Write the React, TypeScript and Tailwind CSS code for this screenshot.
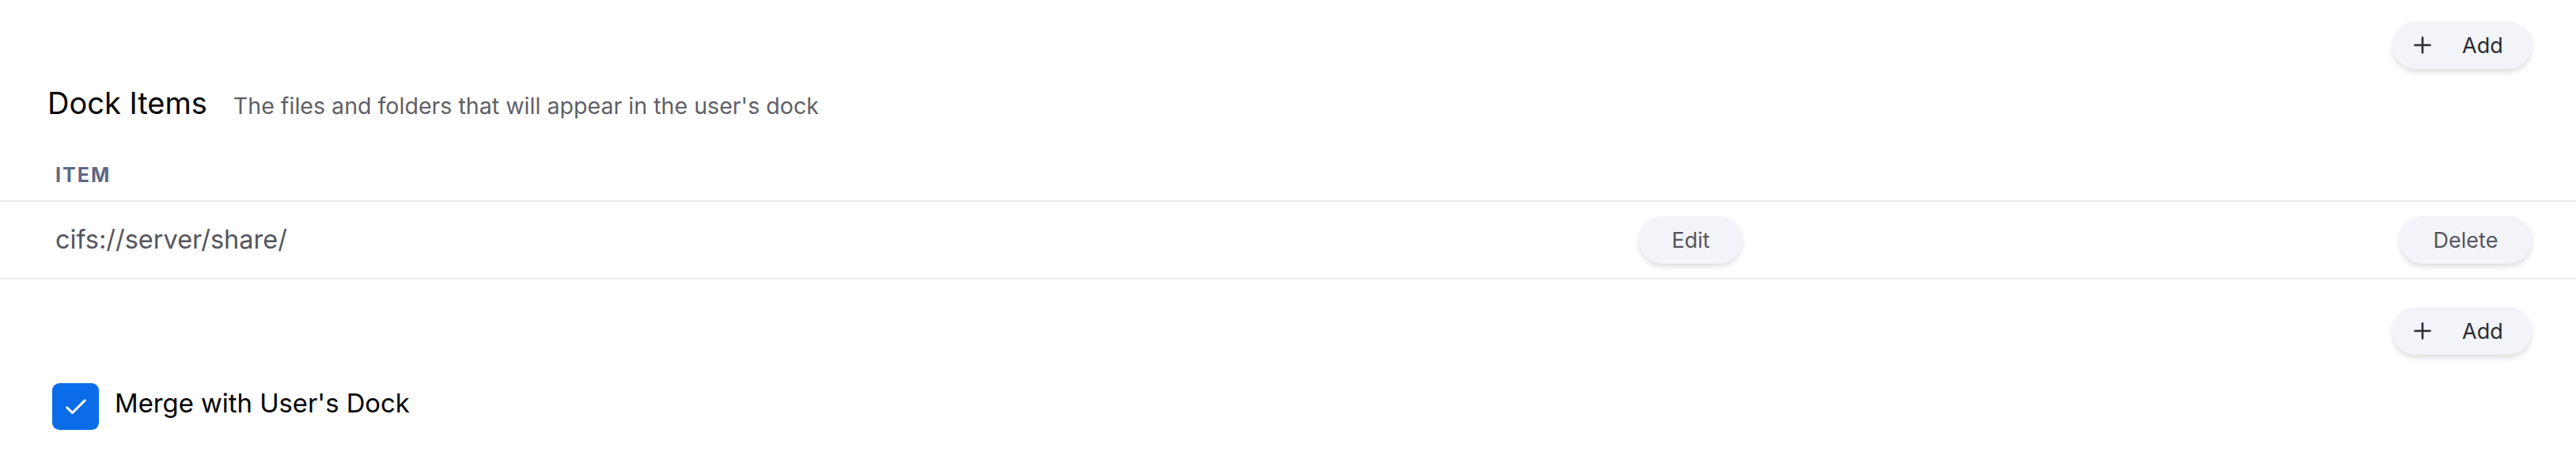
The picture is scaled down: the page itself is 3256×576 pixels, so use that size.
import { ReactNode } from 'react'

const font = { fontFamily: 'Inter, "Liberation Sans", sans-serif' }

function PillButton({ children, className = '' }: { children: ReactNode; className?: string }) {
  return (
    <button
      className={`h-[60px] rounded-full bg-[#f3f4f9] shadow-[0_4px_7px_rgba(0,0,0,0.13)] flex items-center text-[27px] leading-none ${className}`}
    >
      {children}
    </button>
  )
}

function AddButton() {
  return (
    <PillButton className="w-[176px] pl-[27px] gap-[39px] text-[#2c2c33]">
      <svg width="22" height="22" viewBox="0 0 22 22" fill="none" stroke="#2c2c33" strokeWidth="2.6" strokeLinecap="round">
        <line x1="11" y1="1.5" x2="11" y2="20.5" />
        <line x1="1.5" y1="11" x2="20.5" y2="11" />
      </svg>
      <span>Add</span>
    </PillButton>
  )
}

export default function App() {
  return (
    <div className="w-full h-[576px] bg-white overflow-hidden" style={font}>
      {/* Top add */}
      <div className="flex justify-end pr-[56px] pt-[27px]">
        <AddButton />
      </div>

      {/* Title */}
      <div className="flex items-baseline gap-[33px] pl-[60px] mt-[24px]">
        <h2 className="text-[38px] leading-none text-black">Dock Items</h2>
        <p className="text-[28.6px] leading-none text-[#5f5f67]">The files and folders that will appear in the user's dock</p>
      </div>

      {/* Table */}
      <div className="mt-[41px]">
        <div className="h-[65px] border-b-2 border-[#ebebef] flex items-center pl-[70px]">
          <span className="text-[25px] leading-none font-bold tracking-[0.08em] text-[#5d6783]">ITEM</span>
        </div>
        <div className="h-[98px] border-b-2 border-[#ebebef] flex items-center pl-[70px]">
          <span className="flex-1 text-[32.5px] leading-none text-[#55555e]">cifs://server/share/</span>
          <PillButton className="w-[130px] justify-center text-[#55555e]">Edit</PillButton>
          <div className="w-[1054px] flex justify-end pr-[56px]">
            <PillButton className="w-[167px] justify-center text-[#55555e]">Delete</PillButton>
          </div>
        </div>
      </div>

      {/* Bottom add */}
      <div className="flex justify-end pr-[56px] mt-[35px]">
        <AddButton />
      </div>

      {/* Merge checkbox */}
      <label className="flex items-center gap-[20px] pl-[66px] mt-[36px]">
        <span className="w-[59px] h-[59px] rounded-[9px] bg-[#0a6ce9] flex items-center justify-center">
          <svg width="36" height="36" viewBox="0 0 24 24" fill="none" stroke="white" strokeWidth="2" strokeLinecap="round" strokeLinejoin="round">
            <path d="M4.5 12.5l4.5 4.5L19.5 6.5" />
          </svg>
        </span>
        <span className="text-[32.8px] leading-none text-black mb-[8px]">Merge with User's Dock</span>
      </label>
    </div>
  )
}
